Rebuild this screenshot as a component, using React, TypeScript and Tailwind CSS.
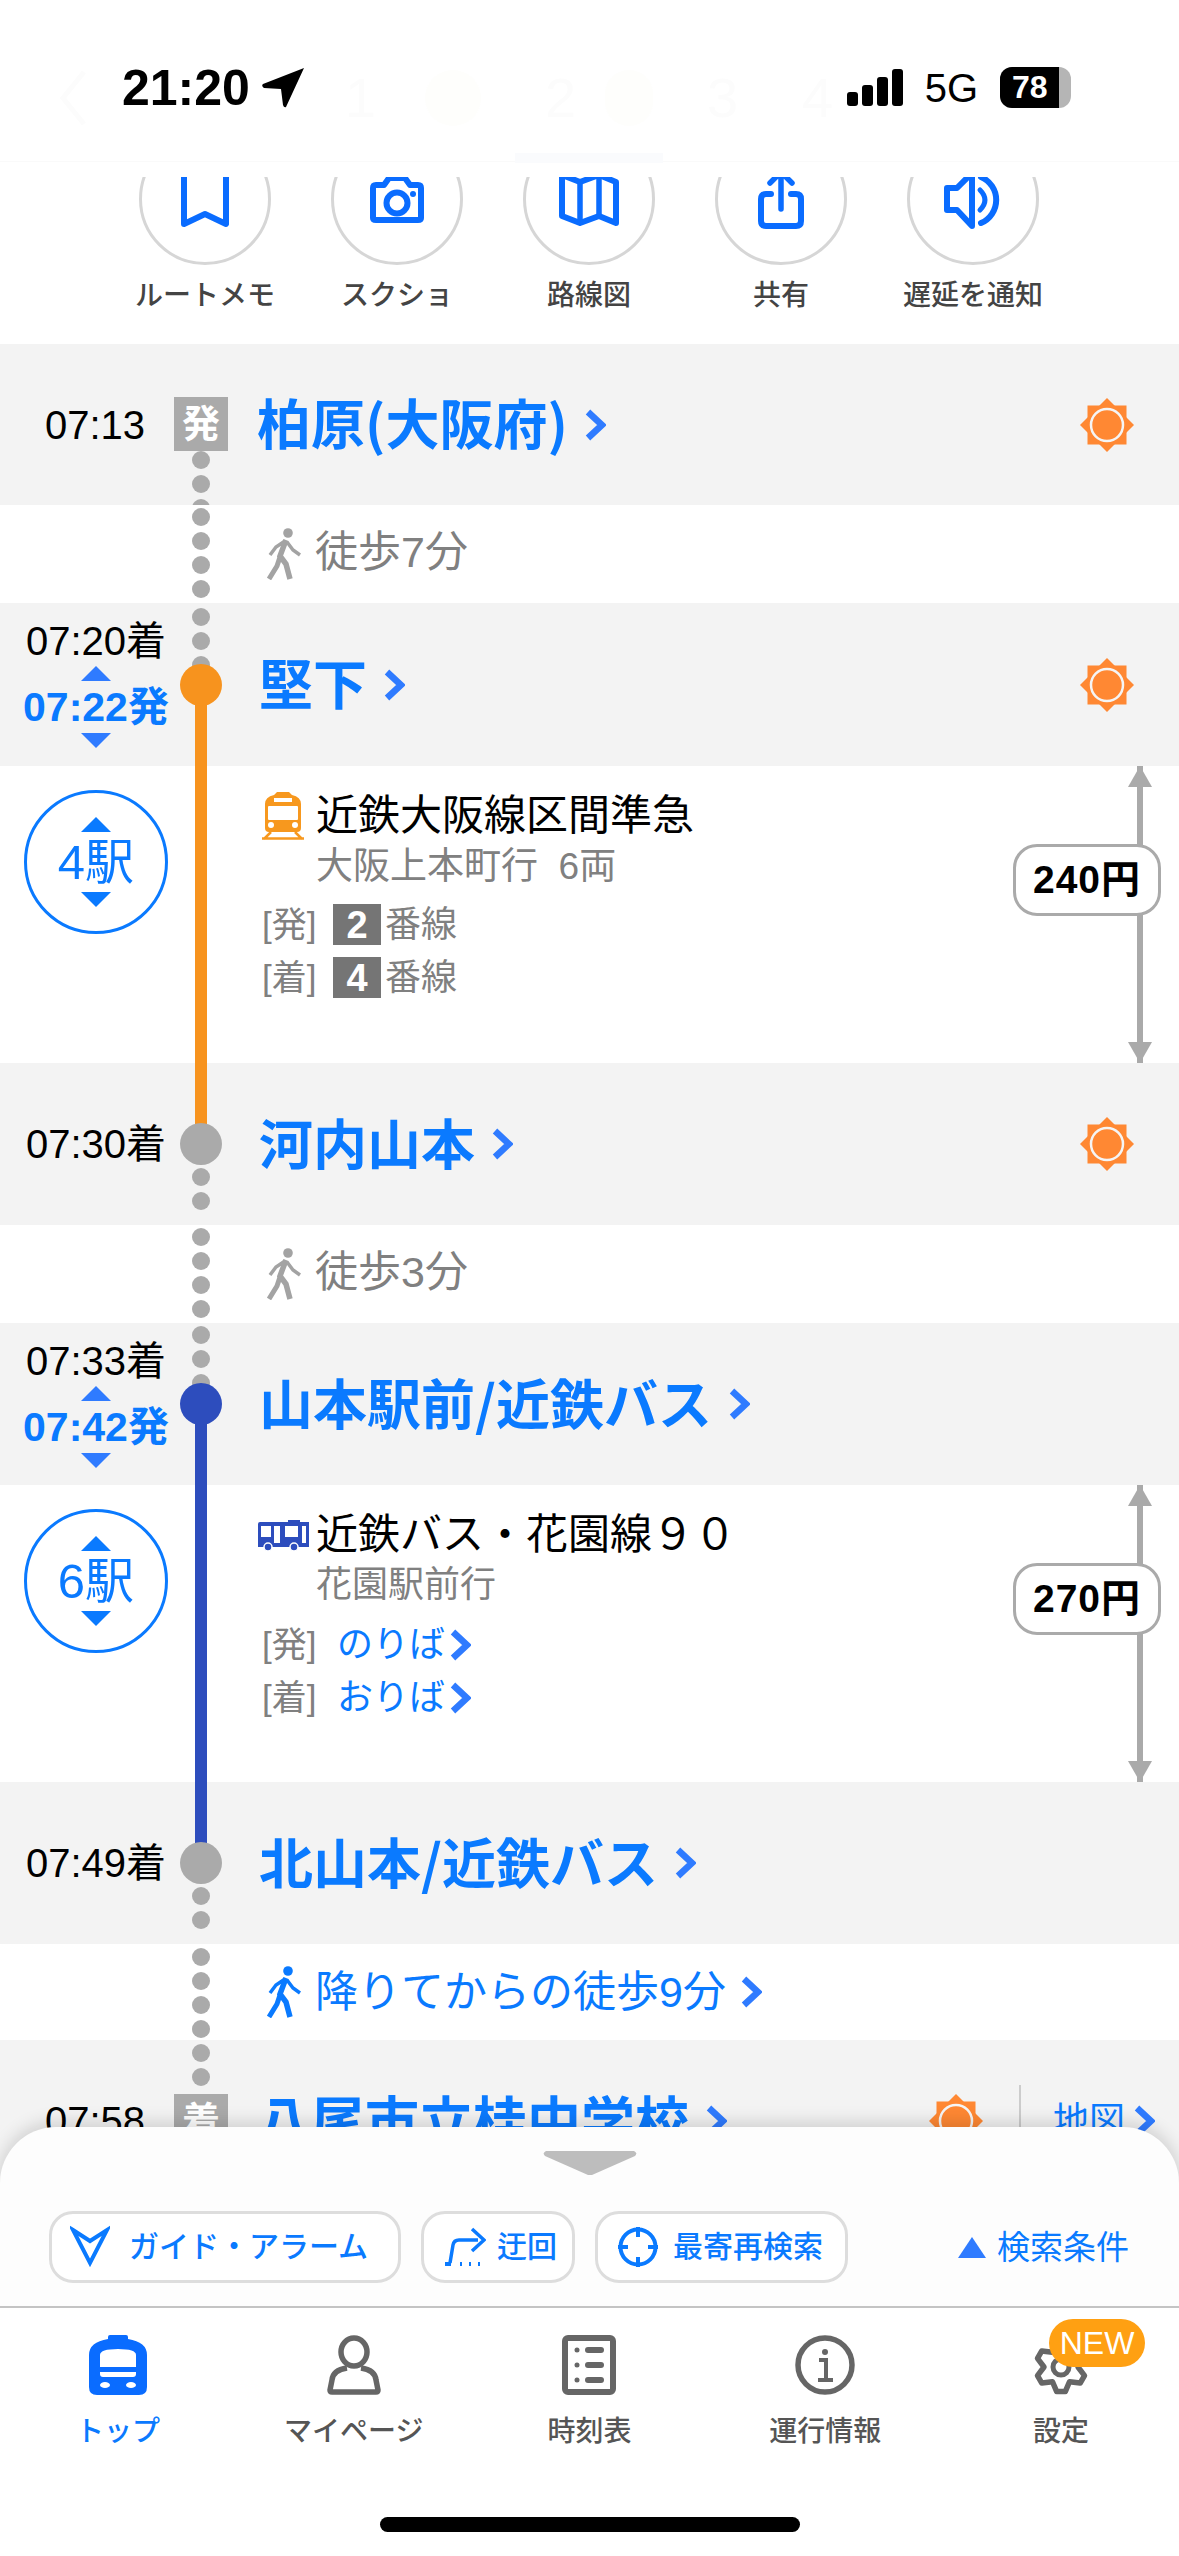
import React from 'react';

const font = 'font-["Liberation_Sans","Noto_Sans_CJK_JP",sans-serif]';

// six-toothed cog outline for the settings tab
function cogPath() {
  const pt = (deg: number, r: number) => {
    const a = (deg * Math.PI) / 180;
    return `${(28 + r * Math.cos(a)).toFixed(1)} ${(28 + r * Math.sin(a)).toFixed(1)}`;
  };
  const parts: string[] = [];
  for (let i = 0; i < 6; i++) {
    const a = 90 + i * 60;
    parts.push(pt(a - 30, 17), pt(a - 10, 25), pt(a + 10, 25));
  }
  return `M${parts.join('L')}Z`;
}

function Sun() {
  return (
    <svg width="54" height="54" viewBox="0 0 54 54" className="shrink-0">
      <polygon points="27,0 54,27 27,54 0,27" fill="#ff8833" />
      <rect x="7.5" y="7.5" width="39" height="39" fill="#ff8833" />
      <circle cx="27" cy="27" r="16" fill="#ff8833" stroke="#f5f5f5" strokeWidth="2.5" />
    </svg>
  );
}

function Chevron({ h = 32 }: { h?: number }) {
  return (
    <svg width={(h * 22) / 32} height={h} viewBox="0 0 22 32" className="shrink-0">
      <path d="M4 3L18 16L4 29" fill="none" stroke="#2f7bff" strokeWidth="6.5" />
    </svg>
  );
}

function Tri({ down, className }: { down?: boolean; className?: string }) {
  return (
    <svg width="30" height="15" viewBox="0 0 30 15" className={className}>
      <polygon points={down ? '0,0 30,0 15,15' : '15,0 30,15 0,15'} fill="currentColor" />
    </svg>
  );
}

function Walker({ color = '#a3a3a3' }: { color?: string }) {
  return (
    <svg width="34" height="52" viewBox="0 0 34 52" className="shrink-0">
      <circle cx="21" cy="5" r="4.8" fill={color} />
      <path d="M19 12L13 28L19 36L23 51" fill="none" stroke={color} strokeWidth="5.5" />
      <path d="M13 29L10 38L2 51" fill="none" stroke={color} strokeWidth="5" />
      <path d="M18 13L9 19L3 27M20 14L26 22L33 27" fill="none" stroke={color} strokeWidth="3.5" />
    </svg>
  );
}

function Dots({ n, className }: { n: number; className: string }) {
  return (
    <div className={`absolute left-[192px] flex w-[18px] flex-col gap-[6px] ${className}`}>
      {Array.from({ length: n }).map((_, i) => (
        <div key={i} className="h-[18px] w-[18px] shrink-0 rounded-full bg-[#aaaaaa]" />
      ))}
    </div>
  );
}

function StationName({ name }: { name: string }) {
  return (
    <div className="ml-[67px] flex items-center gap-[16px]">
      <span className='-mt-[5px] font-["Noto_Sans_CJK_JP",sans-serif] text-[54px] leading-none font-bold whitespace-nowrap text-[#0a7aff]'>{name}</span>
      <Chevron />
    </div>
  );
}

function TimeStack({ arrive, depart }: { arrive: string; depart: string }) {
  return (
    <div className="flex w-[192px] flex-col items-center">
      <span className="text-[40px] leading-none whitespace-nowrap text-black">{arrive}</span>
      <Tri className="mt-[5px] text-[#2f7bff]" />
      <span className="my-[6px] text-[41px] leading-[40px] font-bold whitespace-nowrap text-[#0a7aff]">{depart}</span>
      <Tri down className="text-[#2f7bff]" />
    </div>
  );
}

function StopCount({ label }: { label: string }) {
  return (
    <div className="absolute top-[24px] left-[24px] flex h-[144px] w-[144px] flex-col items-center justify-center rounded-full border-[3px] border-[#0a7aff] text-[#0a7aff]">
      <Tri className="text-[#0a7aff]" />
      <span className="my-[8px] text-[49px] leading-[44px]">{label}</span>
      <Tri down className="text-[#0a7aff]" />
    </div>
  );
}

function Fare({ price }: { price: string }) {
  return (
    <>
      <svg width="24" height="297" viewBox="0 0 24 297" className="absolute top-0 left-[1128px]">
        <rect x="9" y="0" width="6" height="297" fill="#aaaaaa" />
        <polygon points="12,0 24,21 0,21" fill="#aaaaaa" />
        <polygon points="12,297 24,276 0,276" fill="#aaaaaa" />
      </svg>
      <div className="absolute top-[78px] left-[1013px] flex h-[72px] w-[148px] items-center justify-center rounded-[24px] border-[3px] border-[#aaaaaa] bg-white text-[39px] font-bold tracking-[1px] text-black">
        {price}
      </div>
    </>
  );
}

function TrainIcon() {
  return (
    <svg width="42" height="48" viewBox="0 0 42 48" className="shrink-0">
      <path d="M3 12Q3 5 12 3L15 0H27L30 3Q39 5 39 12V36Q39 40 35 40H7Q3 40 3 36Z" fill="#f7981e" />
      <rect x="6" y="14" width="30" height="14" rx="1" fill="#fff" />
      <rect x="12" y="6" width="18" height="4" fill="#fff" />
      <circle cx="9" cy="33" r="3" fill="#fff" />
      <circle cx="33" cy="33" r="3" fill="#fff" />
      <path d="M0 46.5H42M9 40L2 47M33 40L40 47" stroke="#f7981e" strokeWidth="2.5" fill="none" />
    </svg>
  );
}

function BusIcon() {
  return (
    <svg width="51" height="31" viewBox="0 0 51 31" className="shrink-0">
      <path d="M0 4Q0 2 2 2H30V0H42V2H51V27H0Z" fill="#2d4dbd" />
      <rect x="3" y="6" width="10" height="11" fill="#fff" />
      <rect x="16" y="6" width="6" height="17" fill="#fff" />
      <rect x="27" y="6" width="13" height="11" fill="#fff" />
      <rect x="44" y="6" width="4" height="17" fill="#fff" />
      <circle cx="10" cy="27" r="4" fill="#2d4dbd" stroke="#fff" strokeWidth="1.5" />
      <circle cx="36" cy="27" r="4" fill="#2d4dbd" stroke="#fff" strokeWidth="1.5" />
    </svg>
  );
}

function Action({ label, icon }: { label: string; icon: React.ReactNode }) {
  return (
    <div className="flex w-[192px] flex-col items-center">
      <div className="-mt-[44px] flex h-[132px] w-[132px] items-center justify-center rounded-full border-[3px] border-[#d6d6d6]">
        {icon}
      </div>
      <span className="mt-[13px] text-[28px] leading-[36px] font-medium whitespace-nowrap text-[#444444]">{label}</span>
    </div>
  );
}

function Pill({ icon, label, className }: { icon: React.ReactNode; label: string; className: string }) {
  return (
    <div className={`flex h-[72px] items-center rounded-[24px] border-[3px] border-[#dddddd] bg-white ${className}`}>
      {icon}
      <span className="text-[30px] leading-none font-medium whitespace-nowrap text-[#0a7aff]">{label}</span>
    </div>
  );
}

function Tab({ label, icon, active }: { label: string; icon: React.ReactNode; active?: boolean }) {
  return (
    <div className="relative flex w-[235.8px] flex-col items-center">
      <div className="flex h-[60px] items-end justify-center">{icon}</div>
      <span className={`mt-[19px] text-[28px] leading-[36px] font-medium ${active ? 'font-bold text-[#0a7aff]' : 'text-[#555555]'}`}>
        {label}
      </span>
    </div>
  );
}

function WalkRow({ text }: { text: string }) {
  return (
    <div className="relative flex h-[98px] items-center bg-white pl-[267px]">
      <Walker />
      <span className="-mt-[4px] ml-[14px] text-[43px] leading-none text-[#808080]">{text}</span>
      <Dots n={4} className="top-[3px]" />
    </div>
  );
}

export default function App() {
  return (
    <div className={`relative h-[2556px] w-[1179px] overflow-hidden bg-white ${font}`}>
      {/* status bar + faded nav behind it */}
      <div className="relative h-[177px]">
        <div className="absolute top-[70px] left-[60px] text-[#fcfcfc]">
          <svg width="26" height="56" viewBox="0 0 26 56">
            <path d="M24 2L3 28L24 54" fill="none" stroke="currentColor" strokeWidth="5" />
          </svg>
        </div>
        <div className="absolute top-[70px] left-[345px] flex items-center text-[56px] leading-[56px] font-medium text-[#fcfcfc]">
          <span className="w-[80px]">1</span>
          <span className="h-[56px] w-[56px] rounded-full bg-[#fefefc]" />
          <span className="ml-[64px] w-[60px]">2</span>
          <span className="h-[56px] w-[48px] rounded-full bg-[#fefefc]" />
          <span className="ml-[54px] w-[95px]">3</span>
          <span>4</span>
        </div>
        <div className="relative flex h-[162px] items-start border-b border-[#fafafa] pt-[62px] pl-[122px] text-black">
          <span className="text-[50px] leading-[52px] font-bold">21:20</span>
          <svg width="42" height="40" viewBox="0 0 42 40" className="mt-[6px] ml-[12px]">
            <path d="M42 0L24 39Q22 40 21 37L19 21L2 20Q-1 18 1 16Z" fill="#000" />
          </svg>
          <div className="mt-[7px] ml-auto flex h-[37px] items-end gap-[4px]">
            <div className="h-[14px] w-[11px] rounded-[3px] bg-black" />
            <div className="h-[21px] w-[11px] rounded-[3px] bg-black" />
            <div className="h-[29px] w-[11px] rounded-[3px] bg-black" />
            <div className="h-[37px] w-[11px] rounded-[3px] bg-black" />
          </div>
          <span className="mt-[4px] ml-[22px] text-[40px] leading-[44px]">5G</span>
          <div className="relative mt-[5px] mr-[108px] ml-[22px] flex h-[41px] w-[71px] overflow-hidden rounded-[12px] bg-[#b5b5b5]">
            <div className="h-full w-[59px] bg-black" />
            <span className="absolute top-0 left-[12px] text-[32px] leading-[41px] font-bold text-white">78</span>
          </div>
        </div>
        <div className="absolute top-[153px] left-[515px] h-[10px] w-[148px] bg-[#fafbfd]" />
      </div>

      {/* action buttons */}
      <div className="flex h-[167px] justify-start overflow-hidden pl-[109px]">
        <Action
          label="ルートメモ"
          icon={
            <svg width="48" height="58" viewBox="0 0 48 58">
              <path d="M3 0V54L24 44L45 54V0Z" fill="none" stroke="#0a6cff" strokeWidth="6" strokeLinejoin="round" />
            </svg>
          }
        />
        <Action
          label="スクショ"
          icon={
            <svg width="54" height="50" viewBox="0 0 54 50">
              <path d="M3 14Q3 11 6 11H14L19 4H35L40 11H48Q51 11 51 14V44Q51 46 48 46H6Q3 46 3 44Z" fill="none" stroke="#0a6cff" strokeWidth="6" strokeLinejoin="round" />
              <circle cx="27" cy="29" r="10.5" fill="none" stroke="#0a6cff" strokeWidth="6" />
              <circle cx="43" cy="20" r="3" fill="#0a6cff" />
            </svg>
          }
        />
        <Action
          label="路線図"
          icon={
            <svg width="60" height="56" viewBox="0 0 60 56">
              <path d="M3 4L21 11L40 4L57 11V52L40 45L21 52L3 45Z" fill="none" stroke="#0a6cff" strokeWidth="6" strokeLinejoin="round" />
              <path d="M21 11V52M40 4V45" fill="none" stroke="#0a6cff" strokeWidth="5.5" />
            </svg>
          }
        />
        <Action
          label="共有"
          icon={
            <svg width="46" height="60" viewBox="0 0 46 60">
              <path d="M13 25H8Q3 25 3 30V52Q3 57 8 57H38Q43 57 43 52V30Q43 25 38 25H33" fill="none" stroke="#0a6cff" strokeWidth="6" strokeLinecap="round" />
              <path d="M23 40V4M12 14L23 3L34 14" fill="none" stroke="#0a6cff" strokeWidth="5.5" strokeLinecap="round" />
            </svg>
          }
        />
        <Action
          label="遅延を通知"
          icon={
            <svg width="58" height="60" viewBox="0 0 58 60">
              <path d="M3 19H13L28 4V57L13 41H3Z" fill="none" stroke="#0a6cff" strokeWidth="6" strokeLinejoin="round" />
              <path d="M36 21Q46 31 36 41" fill="none" stroke="#0a6cff" strokeWidth="5" strokeLinecap="round" />
              <path d="M37 8A25 25 0 0 1 37 54" fill="none" stroke="#0a6cff" strokeWidth="6" strokeLinecap="round" />
            </svg>
          }
        />
      </div>

      {/* 柏原 */}
      <div className="relative flex h-[161px] items-center bg-[#f3f3f3]">
        <span className="w-[190px] text-center text-[40px] leading-none text-black">07:13</span>
        <StationName name="柏原(大阪府)" />
        <div className="mr-[45px] ml-auto"><Sun /></div>
        <div className="absolute top-[53px] left-[174px] flex h-[54px] w-[54px] items-center justify-center bg-[#aaaaaa] text-[38px] leading-none font-bold text-white">発</div>
        <div className="absolute top-[107px] left-0 h-[54px] w-full overflow-hidden">
          <Dots n={3} className="top-[0px]" />
        </div>
      </div>

      <WalkRow text="徒歩7分" />

      {/* 堅下 */}
      <div className="relative flex h-[163px] items-center bg-[#f3f3f3]">
        <TimeStack arrive="07:20着" depart="07:22発" />
        <StationName name="堅下" />
        <div className="mr-[45px] ml-auto"><Sun /></div>
        <Dots n={3} className="top-[5px]" />
        <div className="absolute top-[82px] bottom-0 left-[195px] w-[12px] bg-[#f7931e]" />
        <div className="absolute top-[61px] left-[180px] h-[42px] w-[42px] rounded-full bg-[#f7931e]" />
      </div>

      {/* 近鉄大阪線 */}
      <div className="relative h-[297px] bg-white pt-[26px] pl-[262px]">
        <StopCount label="4駅" />
        <div className="absolute top-0 bottom-0 left-[195px] w-[12px] bg-[#f7931e]" />
        <div className="flex items-center">
          <TrainIcon />
          <span className="ml-[12px] text-[42px] leading-[46px] whitespace-nowrap text-black">近鉄大阪線区間準急</span>
        </div>
        <div className="mt-[4px] ml-[54px] text-[37px] leading-[46px] whitespace-pre text-[#808080]">大阪上本町行  6両</div>
        <div className="mt-[14px] flex h-[41px] items-center text-[#808080]">
          <span className="w-[71px] text-[35px] leading-none">[発]</span>
          <span className="flex h-[41px] w-[48px] items-center justify-center bg-[#757575] text-[38px] leading-none font-bold text-white">2</span>
          <span className="ml-[4px] text-[36px] leading-none">番線</span>
        </div>
        <div className="mt-[12px] flex h-[41px] items-center text-[#808080]">
          <span className="w-[71px] text-[35px] leading-none">[着]</span>
          <span className="flex h-[41px] w-[48px] items-center justify-center bg-[#757575] text-[38px] leading-none font-bold text-white">4</span>
          <span className="ml-[4px] text-[36px] leading-none">番線</span>
        </div>
        <Fare price="240円" />
      </div>

      {/* 河内山本 */}
      <div className="relative flex h-[162px] items-center bg-[#f3f3f3]">
        <span className="w-[192px] text-center text-[40px] leading-none text-black">07:30着</span>
        <StationName name="河内山本" />
        <div className="mr-[45px] ml-auto"><Sun /></div>
        <div className="absolute top-0 bottom-[81px] left-[195px] w-[12px] bg-[#f7931e]" />
        <div className="absolute top-[60px] left-[180px] h-[42px] w-[42px] rounded-full bg-[#aaaaaa]" />
        <Dots n={2} className="top-[105px]" />
      </div>

      <WalkRow text="徒歩3分" />

      {/* 山本駅前 */}
      <div className="relative flex h-[162px] items-center bg-[#f3f3f3]">
        <TimeStack arrive="07:33着" depart="07:42発" />
        <StationName name="山本駅前/近鉄バス" />
        <Dots n={3} className="top-[3px]" />
        <div className="absolute top-[81px] bottom-0 left-[195px] w-[12px] bg-[#2d4dbd]" />
        <div className="absolute top-[60px] left-[180px] h-[42px] w-[42px] rounded-full bg-[#2d4dbd]" />
      </div>

      {/* 近鉄バス */}
      <div className="relative h-[297px] bg-white pt-[27px] pl-[258px]">
        <StopCount label="6駅" />
        <div className="absolute top-0 bottom-0 left-[195px] w-[12px] bg-[#2d4dbd]" />
        <div className="flex h-[46px] items-center">
          <BusIcon />
          <span className="ml-[7px] text-[42px] leading-[46px] whitespace-nowrap text-black">近鉄バス・花園線９０</span>
        </div>
        <div className="mt-[4px] ml-[58px] text-[36px] leading-[46px] text-[#808080]">花園駅前行</div>
        <div className="mt-[16px] ml-[4px] flex h-[41px] items-center">
          <span className="w-[75px] text-[35px] leading-none text-[#808080]">[発]</span>
          <span className="text-[36px] leading-none text-[#0a7aff]">のりば</span>
          <div className="ml-[4px]"><Chevron /></div>
        </div>
        <div className="mt-[12px] ml-[4px] flex h-[41px] items-center">
          <span className="w-[75px] text-[35px] leading-none text-[#808080]">[着]</span>
          <span className="text-[36px] leading-none text-[#0a7aff]">おりば</span>
          <div className="ml-[4px]"><Chevron /></div>
        </div>
        <Fare price="270円" />
      </div>

      {/* 北山本 */}
      <div className="relative flex h-[162px] items-center bg-[#f3f3f3]">
        <span className="w-[192px] text-center text-[40px] leading-none text-black">07:49着</span>
        <StationName name="北山本/近鉄バス" />
        <div className="absolute top-0 bottom-[81px] left-[195px] w-[12px] bg-[#2d4dbd]" />
        <div className="absolute top-[60px] left-[180px] h-[42px] w-[42px] rounded-full bg-[#aaaaaa]" />
        <Dots n={2} className="top-[105px]" />
      </div>

      {/* 降りてからの徒歩 */}
      <div className="relative flex h-[96px] items-center bg-white pl-[267px]">
        <Walker color="#0a7aff" />
        <span className="ml-[14px] text-[43px] leading-none whitespace-nowrap text-[#0a7aff]">降りてからの徒歩9分</span>
        <div className="ml-[14px]"><Chevron /></div>
        <Dots n={4} className="top-[4px]" />
      </div>

      {/* 八尾市立桂中学校 */}
      <div className="relative flex h-[162px] items-center bg-[#f3f3f3]">
        <span className="w-[190px] text-center text-[40px] leading-none text-black">07:58</span>
        <StationName name="八尾市立桂中学校" />
        <div className="ml-auto"><Sun /></div>
        <div className="ml-[36px] h-[72px] w-[2px] bg-[#cccccc]" />
        <span className="ml-[32px] text-[36px] leading-none text-[#0a7aff]">地図</span>
        <div className="mr-[24px] ml-[8px]"><Chevron /></div>
        <div className="absolute top-[54px] left-[174px] flex h-[54px] w-[54px] items-center justify-center bg-[#aaaaaa] text-[38px] leading-none font-bold text-white">着</div>
        <Dots n={2} className="top-[4px]" />
      </div>

      {/* bottom sheet */}
      <div className="absolute top-[2127px] right-0 bottom-0 left-0 overflow-hidden rounded-t-[56px] bg-[#fdfdfd] shadow-[0_-4px_18px_rgba(0,0,0,0.16)]">
        <div className="flex justify-center pt-[24px]">
          <svg width="94" height="24" viewBox="0 0 94 24">
            <path d="M3 0H91Q95 2 92 5L49 24H45L2 5Q-1 2 3 0Z" fill="#bdbdbd" />
          </svg>
        </div>
        <div className="mt-[36px] flex items-center pl-[49px]">
          <Pill
            className="w-[352px] pl-[18px]"
            label="ガイド・アラーム"
            icon={
              <svg width="40" height="68" viewBox="0 0 40 68" className="mr-[19px] h-[68px]">
                <path d="M3 17L20 28L37 17L20 50Z" fill="none" stroke="#0a7aff" strokeWidth="4" />
              </svg>
            }
          />
          <Pill
            className="ml-[20px] w-[154px] pl-[20px]"
            label="迂回"
            icon={
              <svg width="42" height="40" viewBox="0 0 42 40" className="mr-[11px]">
                <path d="M6 36L9 18Q10 13 15 13H34" fill="none" stroke="#0a7aff" strokeWidth="3.5" />
                <path d="M28 2L40 13L28 24" fill="none" stroke="#0a7aff" strokeWidth="3.5" />
                <path d="M1 37H7M16 37H18M25 37H27M34 37H36" stroke="#0a7aff" strokeWidth="4" />
              </svg>
            }
          />
          <Pill
            className="ml-[20px] w-[253px] pl-[20px]"
            label="最寄再検索"
            icon={
              <svg width="40" height="40" viewBox="0 0 40 40" className="mr-[15px]">
                <circle cx="20" cy="20" r="17.5" fill="none" stroke="#0a7aff" strokeWidth="4" />
                <path d="M20 0V10M20 30V40M0 20H10M30 20H40" stroke="#0a7aff" strokeWidth="4" />
              </svg>
            }
          />
          <svg width="28" height="21" viewBox="0 0 28 21" className="ml-[110px]">
            <polygon points="14,0 28,21 0,21" fill="#2f7bff" />
          </svg>
          <span className="ml-[11px] text-[33px] leading-none whitespace-nowrap text-[#0a7aff]">検索条件</span>
        </div>
        <div className="mt-[23px] h-[2px] bg-[#c4c4c4]" />
        <div className="h-full bg-white pt-[27px]">
          <div className="flex">
            <Tab
              active
              label="トップ"
              icon={
                <svg width="58" height="60" viewBox="0 0 58 60">
                  <path d="M19 2Q19 0 21 0H37Q39 0 39 2V4Q58 7 58 20V52Q58 60 50 60H8Q0 60 0 52V20Q0 7 19 4Z" fill="#0a6cff" />
                  <path d="M11 32V20Q11 14 29 14Q47 14 47 20V32Z" fill="#fff" />
                  <path d="M11 37H47V39Q47 42 44 42H14Q11 42 11 39Z" fill="#fff" />
                  <ellipse cx="16" cy="50" rx="5" ry="3" fill="#fff" />
                  <ellipse cx="42" cy="50" rx="5" ry="3" fill="#fff" />
                </svg>
              }
            />
            <Tab
              label="マイページ"
              icon={
                <svg width="54" height="60" viewBox="0 0 54 60">
                  <ellipse cx="27" cy="17" rx="13" ry="14" fill="none" stroke="#666666" strokeWidth="5.5" />
                  <path d="M20 33Q6 35 5 45L3 55Q3 57 5 57H49Q51 57 51 55L49 45Q48 35 34 33" fill="none" stroke="#666666" strokeWidth="5.5" strokeLinejoin="round" />
                </svg>
              }
            />
            <Tab
              label="時刻表"
              icon={
                <svg width="54" height="60" viewBox="0 0 54 60">
                  <rect x="3" y="3" width="48" height="54" rx="3" fill="none" stroke="#666666" strokeWidth="6" />
                  <circle cx="15" cy="15" r="2.5" fill="#666666" />
                  <circle cx="15" cy="30" r="2.5" fill="#666666" />
                  <circle cx="15" cy="45" r="2.5" fill="#666666" />
                  <rect x="23" y="12" width="19" height="6" rx="3" fill="#666666" />
                  <rect x="23" y="27" width="19" height="6" rx="3" fill="#666666" />
                  <rect x="23" y="42" width="19" height="6" rx="3" fill="#666666" />
                </svg>
              }
            />
            <Tab
              label="運行情報"
              icon={
                <svg width="60" height="60" viewBox="0 0 60 60">
                  <circle cx="30" cy="30" r="27" fill="none" stroke="#666666" strokeWidth="5.5" />
                  <circle cx="30" cy="17" r="3" fill="#666666" />
                  <path d="M24 25H31V44M23 45H38" fill="none" stroke="#666666" strokeWidth="4" />
                </svg>
              }
            />
            <Tab
              label="設定"
              icon={
                <svg width="56" height="56" viewBox="0 0 56 56">
                  <path d={cogPath()} fill="none" stroke="#666666" strokeWidth="5.5" strokeLinejoin="round" />
                  <circle cx="28" cy="28" r="8" fill="none" stroke="#666666" strokeWidth="5" />
                </svg>
              }
            />
          </div>
          <div className="absolute top-[192px] left-[1049px] flex h-[48px] w-[96px] items-center justify-center rounded-full bg-[#ffa012] text-[32px] leading-none text-white">
            NEW
          </div>
        </div>
        <div className="absolute top-[390px] left-[380px] h-[15px] w-[420px] rounded-full bg-black" />
      </div>
    </div>
  );
}
